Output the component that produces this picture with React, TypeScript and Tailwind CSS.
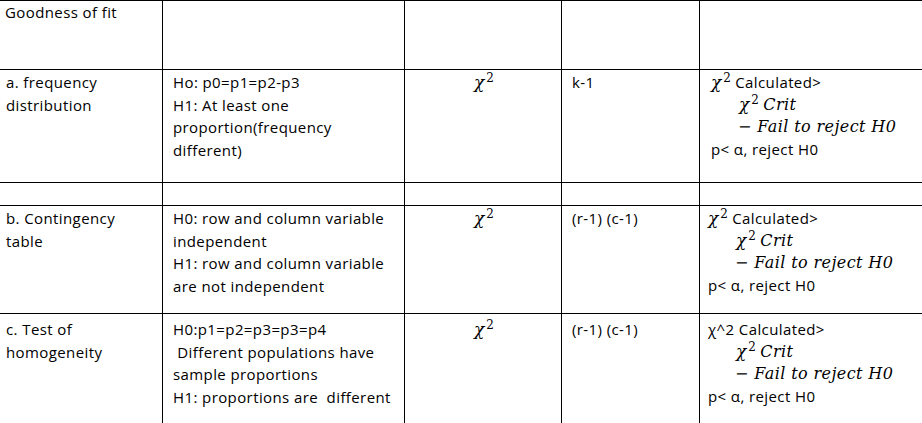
import React from "react";

const font = { fontFamily: "'Open Sans', sans-serif" };

function M({ children }: { children: React.ReactNode }) {
  return <span className="font-['DejaVu_Serif',serif] italic text-[16px] tracking-[0.4px]">{children}</span>;
}

function Chi() {
  return (
    <span className="font-['DejaVu_Serif',serif] text-[17px] tracking-normal">
      <span className="italic">χ</span>
      <sup className="text-[12px] not-italic relative -top-[6px] ml-[2px]">2</sup>
    </span>
  );
}

function Decision({ plain }: { plain?: boolean }) {
  return (
    <div className="flex flex-col">
      <div className="h-[22px] leading-[22px]">
        {plain ? <span>χ^2 Calculated&gt;</span> : <span><Chi /> Calculated&gt;</span>}
      </div>
      <div className="h-[22px] leading-[22px] pl-[28px]">
        <Chi /> <M>Crit</M>
      </div>
      <div className="h-[23px] leading-[23px] pl-[27px]">
        <M>− Fail to reject H0</M>
      </div>
      <div className="h-[22px] leading-[22px]">p&lt; α, reject H0</div>
    </div>
  );
}

export default function App() {
  const cell = "border-l border-black";
  return (
    <div className="w-[922px] h-[423px] overflow-hidden bg-white text-black text-[15px] tracking-[0.4px] leading-[22.5px]" style={font}>
      {/* header row */}
      <div className="flex border-t border-black h-[69px]">
        <div className="w-[162px] pl-[5px] pt-0">Goodness of fit</div>
        <div className={`${cell} w-[242px]`} />
        <div className={`${cell} w-[157px]`} />
        <div className={`${cell} w-[138px]`} />
        <div className={`${cell} flex-1`} />
      </div>
      {/* row a */}
      <div className="flex border-t border-black h-[113px]">
        <div className="w-[162px] pl-[6px] pt-[1px]">
          <div>a. frequency</div>
          <div>distribution</div>
        </div>
        <div className={`${cell} w-[242px] pl-[10px] pt-[1px]`}>
          <div>Ho: p0=p1=p2-p3</div>
          <div>H1: At least one</div>
          <div>proportion(frequency</div>
          <div>different)</div>
        </div>
        <div className={`${cell} w-[157px] pt-[1px] flex justify-center`}>
          <div className="pl-[2px]"><Chi /></div>
        </div>
        <div className={`${cell} w-[138px] pl-[10px] pt-[1px]`}>k-1</div>
        <div className={`${cell} flex-1 pl-[11px] pt-[1px]`}>
          <Decision />
        </div>
      </div>
      {/* spacer row */}
      <div className="flex border-t border-black h-[23px]">
        <div className="w-[162px]" />
        <div className={`${cell} w-[242px]`} />
        <div className={`${cell} w-[157px]`} />
        <div className={`${cell} w-[138px]`} />
        <div className={`${cell} flex-1`} />
      </div>
      {/* row b */}
      <div className="flex border-t border-black h-[108px]">
        <div className="w-[162px] pl-[6px] pt-[1px]">
          <div>b. Contingency</div>
          <div>table</div>
        </div>
        <div className={`${cell} w-[242px] pl-[10px] pt-[1px]`}>
          <div>H0: row and column variable</div>
          <div>independent</div>
          <div>H1: row and column variable</div>
          <div>are not independent</div>
        </div>
        <div className={`${cell} w-[157px] pt-[1px] flex justify-center`}>
          <div className="pl-[2px]"><Chi /></div>
        </div>
        <div className={`${cell} w-[138px] pl-[10px] pt-[1px]`}>(r-1) (c-1)</div>
        <div className={`${cell} flex-1 pl-[8px] pt-[1px]`}>
          <Decision />
        </div>
      </div>
      {/* row c */}
      <div className="flex border-t border-black h-[120px]">
        <div className="w-[162px] pl-[6px] pt-[4px]">
          <div>c. Test of</div>
          <div>homogeneity</div>
        </div>
        <div className={`${cell} w-[242px] pl-[10px] pt-[4px]`}>
          <div>H0:p1=p2=p3=p3=p4</div>
          <div>&nbsp;Different populations have</div>
          <div>sample proportions</div>
          <div>H1: proportions are &nbsp;different</div>
        </div>
        <div className={`${cell} w-[157px] pt-[4px] flex justify-center`}>
          <div className="pl-[2px]"><Chi /></div>
        </div>
        <div className={`${cell} w-[138px] pl-[10px] pt-[4px]`}>(r-1) (c-1)</div>
        <div className={`${cell} flex-1 pl-[8px] pt-[4px]`}>
          <Decision plain />
        </div>
      </div>
    </div>
  );
}
